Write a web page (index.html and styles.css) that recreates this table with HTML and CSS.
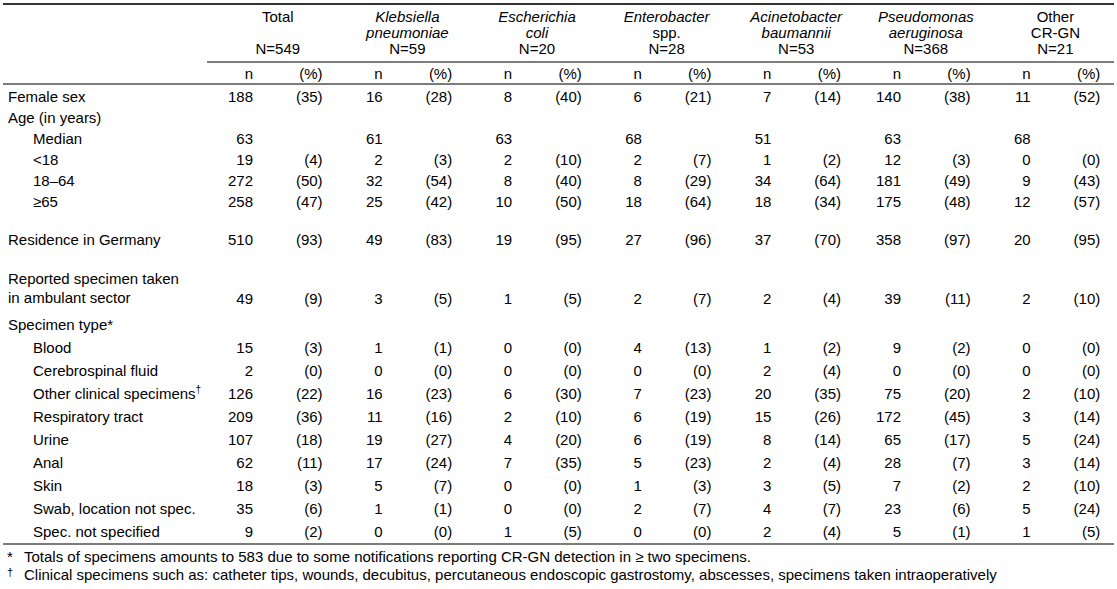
FILE: index.html
```html
<!DOCTYPE html>
<html>
<head>
<meta charset="utf-8">
<link rel="stylesheet" href="styles.css">
</head>
<body>
<div class="page">
<table class="stats">
<colgroup>
<col class="c-label">
<col class="c-n"><col class="c-p">
<col class="c-n"><col class="c-p">
<col class="c-n"><col class="c-p">
<col class="c-n"><col class="c-p">
<col class="c-n"><col class="c-p">
<col class="c-n"><col class="c-p">
<col class="c-n"><col class="c-p">
</colgroup>
<thead>
<tr class="head1">
<th class="blank"></th>
<th colspan="2" class="grp"><div class="gh"><span>Total</span><span>N=549</span></div></th>
<th colspan="2" class="grp"><div class="gh"><span class="sp">Klebsiella</span><span class="sp">pneumoniae</span><span>N=59</span></div></th>
<th colspan="2" class="grp"><div class="gh"><span class="sp">Escherichia</span><span class="sp">coli</span><span>N=20</span></div></th>
<th colspan="2" class="grp"><div class="gh"><span class="sp">Enterobacter</span><span>spp.</span><span>N=28</span></div></th>
<th colspan="2" class="grp"><div class="gh"><span class="sp">Acinetobacter</span><span class="sp">baumannii</span><span>N=53</span></div></th>
<th colspan="2" class="grp"><div class="gh"><span class="sp">Pseudomonas</span><span class="sp">aeruginosa</span><span>N=368</span></div></th>
<th colspan="2" class="grp"><div class="gh"><span>Other</span><span>CR-GN</span><span>N=21</span></div></th>
</tr>
<tr class="head2">
<th></th>
<th class="n">n</th><th class="p">(%)</th>
<th class="n">n</th><th class="p">(%)</th>
<th class="n">n</th><th class="p">(%)</th>
<th class="n">n</th><th class="p">(%)</th>
<th class="n">n</th><th class="p">(%)</th>
<th class="n">n</th><th class="p">(%)</th>
<th class="n">n</th><th class="p">(%)</th>
</tr>
</thead>
<tbody>
<tr class="first"><td class="lbl">Female sex</td><td class="n">188</td><td class="p">(35)</td><td class="n">16</td><td class="p">(28)</td><td class="n">8</td><td class="p">(40)</td><td class="n">6</td><td class="p">(21)</td><td class="n">7</td><td class="p">(14)</td><td class="n">140</td><td class="p">(38)</td><td class="n">11</td><td class="p">(52)</td></tr>
<tr><td class="lbl">Age (in years)</td><td colspan="14"></td></tr>
<tr><td class="lbl sub">Median</td><td class="n">63</td><td class="p"></td><td class="n">61</td><td class="p"></td><td class="n">63</td><td class="p"></td><td class="n">68</td><td class="p"></td><td class="n">51</td><td class="p"></td><td class="n">63</td><td class="p"></td><td class="n">68</td><td class="p"></td></tr>
<tr><td class="lbl sub">&lt;18</td><td class="n">19</td><td class="p">(4)</td><td class="n">2</td><td class="p">(3)</td><td class="n">2</td><td class="p">(10)</td><td class="n">2</td><td class="p">(7)</td><td class="n">1</td><td class="p">(2)</td><td class="n">12</td><td class="p">(3)</td><td class="n">0</td><td class="p">(0)</td></tr>
<tr><td class="lbl sub">18–64</td><td class="n">272</td><td class="p">(50)</td><td class="n">32</td><td class="p">(54)</td><td class="n">8</td><td class="p">(40)</td><td class="n">8</td><td class="p">(29)</td><td class="n">34</td><td class="p">(64)</td><td class="n">181</td><td class="p">(49)</td><td class="n">9</td><td class="p">(43)</td></tr>
<tr><td class="lbl sub">≥65</td><td class="n">258</td><td class="p">(47)</td><td class="n">25</td><td class="p">(42)</td><td class="n">10</td><td class="p">(50)</td><td class="n">18</td><td class="p">(64)</td><td class="n">18</td><td class="p">(34)</td><td class="n">175</td><td class="p">(48)</td><td class="n">12</td><td class="p">(57)</td></tr>
<tr class="gap"><td class="lbl">Residence in Germany</td><td class="n">510</td><td class="p">(93)</td><td class="n">49</td><td class="p">(83)</td><td class="n">19</td><td class="p">(95)</td><td class="n">27</td><td class="p">(96)</td><td class="n">37</td><td class="p">(70)</td><td class="n">358</td><td class="p">(97)</td><td class="n">20</td><td class="p">(95)</td></tr>
<tr class="gap two"><td class="lbl">Reported specimen taken<br>in ambulant sector</td><td class="n">49</td><td class="p">(9)</td><td class="n">3</td><td class="p">(5)</td><td class="n">1</td><td class="p">(5)</td><td class="n">2</td><td class="p">(7)</td><td class="n">2</td><td class="p">(4)</td><td class="n">39</td><td class="p">(11)</td><td class="n">2</td><td class="p">(10)</td></tr>
<tr class="spec-head"><td class="lbl">Specimen type*</td><td colspan="14"></td></tr>
<tr class="spec"><td class="lbl sub">Blood</td><td class="n">15</td><td class="p">(3)</td><td class="n">1</td><td class="p">(1)</td><td class="n">0</td><td class="p">(0)</td><td class="n">4</td><td class="p">(13)</td><td class="n">1</td><td class="p">(2)</td><td class="n">9</td><td class="p">(2)</td><td class="n">0</td><td class="p">(0)</td></tr>
<tr class="spec"><td class="lbl sub">Cerebrospinal fluid</td><td class="n">2</td><td class="p">(0)</td><td class="n">0</td><td class="p">(0)</td><td class="n">0</td><td class="p">(0)</td><td class="n">0</td><td class="p">(0)</td><td class="n">2</td><td class="p">(4)</td><td class="n">0</td><td class="p">(0)</td><td class="n">0</td><td class="p">(0)</td></tr>
<tr class="spec"><td class="lbl sub">Other clinical specimens<sup>†</sup></td><td class="n">126</td><td class="p">(22)</td><td class="n">16</td><td class="p">(23)</td><td class="n">6</td><td class="p">(30)</td><td class="n">7</td><td class="p">(23)</td><td class="n">20</td><td class="p">(35)</td><td class="n">75</td><td class="p">(20)</td><td class="n">2</td><td class="p">(10)</td></tr>
<tr class="spec"><td class="lbl sub">Respiratory tract</td><td class="n">209</td><td class="p">(36)</td><td class="n">11</td><td class="p">(16)</td><td class="n">2</td><td class="p">(10)</td><td class="n">6</td><td class="p">(19)</td><td class="n">15</td><td class="p">(26)</td><td class="n">172</td><td class="p">(45)</td><td class="n">3</td><td class="p">(14)</td></tr>
<tr class="spec"><td class="lbl sub">Urine</td><td class="n">107</td><td class="p">(18)</td><td class="n">19</td><td class="p">(27)</td><td class="n">4</td><td class="p">(20)</td><td class="n">6</td><td class="p">(19)</td><td class="n">8</td><td class="p">(14)</td><td class="n">65</td><td class="p">(17)</td><td class="n">5</td><td class="p">(24)</td></tr>
<tr class="spec"><td class="lbl sub">Anal</td><td class="n">62</td><td class="p">(11)</td><td class="n">17</td><td class="p">(24)</td><td class="n">7</td><td class="p">(35)</td><td class="n">5</td><td class="p">(23)</td><td class="n">2</td><td class="p">(4)</td><td class="n">28</td><td class="p">(7)</td><td class="n">3</td><td class="p">(14)</td></tr>
<tr class="spec"><td class="lbl sub">Skin</td><td class="n">18</td><td class="p">(3)</td><td class="n">5</td><td class="p">(7)</td><td class="n">0</td><td class="p">(0)</td><td class="n">1</td><td class="p">(3)</td><td class="n">3</td><td class="p">(5)</td><td class="n">7</td><td class="p">(2)</td><td class="n">2</td><td class="p">(10)</td></tr>
<tr class="spec"><td class="lbl sub">Swab, location not spec.</td><td class="n">35</td><td class="p">(6)</td><td class="n">1</td><td class="p">(1)</td><td class="n">0</td><td class="p">(0)</td><td class="n">2</td><td class="p">(7)</td><td class="n">4</td><td class="p">(7)</td><td class="n">23</td><td class="p">(6)</td><td class="n">5</td><td class="p">(24)</td></tr>
<tr class="spec last"><td class="lbl sub">Spec. not specified</td><td class="n">9</td><td class="p">(2)</td><td class="n">0</td><td class="p">(0)</td><td class="n">1</td><td class="p">(5)</td><td class="n">0</td><td class="p">(0)</td><td class="n">2</td><td class="p">(4)</td><td class="n">5</td><td class="p">(1)</td><td class="n">1</td><td class="p">(5)</td></tr>
</tbody>
</table>
<div class="notes">
<div class="note"><span class="mark">*</span><span>Totals of specimens amounts to 583 due to some notifications reporting CR-GN detection in ≥ two specimens.</span></div>
<div class="note"><span class="mark dag">†</span><span>Clinical specimens such as: catheter tips, wounds, decubitus, percutaneous endoscopic gastrostomy, abscesses, specimens taken intraoperatively</span></div>
</div>
</div>
</body>
</html>
```
FILE: styles.css
```css
body {
  margin: 0;
  background: #fff;
  color: #000;
  font-family: "Liberation Sans", Arial, sans-serif;
  font-size: 15px;
}

.page {
  padding: 3px 3px 0 3px;
}

.stats {
  width: 1111px;
  table-layout: fixed;
  border-collapse: collapse;
  border-spacing: 0;
}

.c-label { width: 204px; }
.c-n { width: 62px; }
.c-p { width: 67.6px; }

.stats th,
.stats td {
  padding: 2px 0;
  line-height: 17px;
  font-weight: normal;
  vertical-align: middle;
}

.head1 th {
  border-top: 2px solid #333;
  height: 56px;
  padding: 0;
}

.head1 th.grp {
  border-bottom: 2px solid #7c7c7c;
  text-align: center;
  padding-left: 12px;
}

.gh {
  display: flex;
  flex-direction: column;
  justify-content: space-between;
  align-items: center;
  height: 48px;
  line-height: 16px;
}

.sp {
  font-style: italic;
}

.head2 th {
  border-bottom: 2px solid #7c7c7c;
  padding: 2px 0 1px;
}

.n {
  text-align: right;
  padding-right: 16px !important;
}

.p {
  text-align: right;
  padding-right: 14px !important;
}

.lbl {
  text-align: left;
  padding-left: 5px !important;
  white-space: nowrap;
}

.lbl.sub {
  padding-left: 30px !important;
}

.first td {
  padding-top: 3px;
}

.gap td {
  padding-top: 19px;
}

.two td {
  vertical-align: bottom;
  padding-top: 19px;
}

.two td.lbl {
  line-height: 19px;
}

.spec-head td {
  padding-top: 7px;
  padding-bottom: 3px;
}

.spec td {
  padding-top: 3px;
  padding-bottom: 3px;
  line-height: 17px;
}

.last td {
  border-bottom: 2px solid #7c7c7c;
}

sup {
  font-size: 10px;
  line-height: 0;
  vertical-align: 6px;
}

.notes {
  padding: 3px 0 0 4px;
}

.note {
  display: flex;
  line-height: 18px;
}

.mark {
  width: 17px;
  flex: none;
}

.mark.dag {
  font-size: 11px;
  position: relative;
  top: -3px;
}
```
